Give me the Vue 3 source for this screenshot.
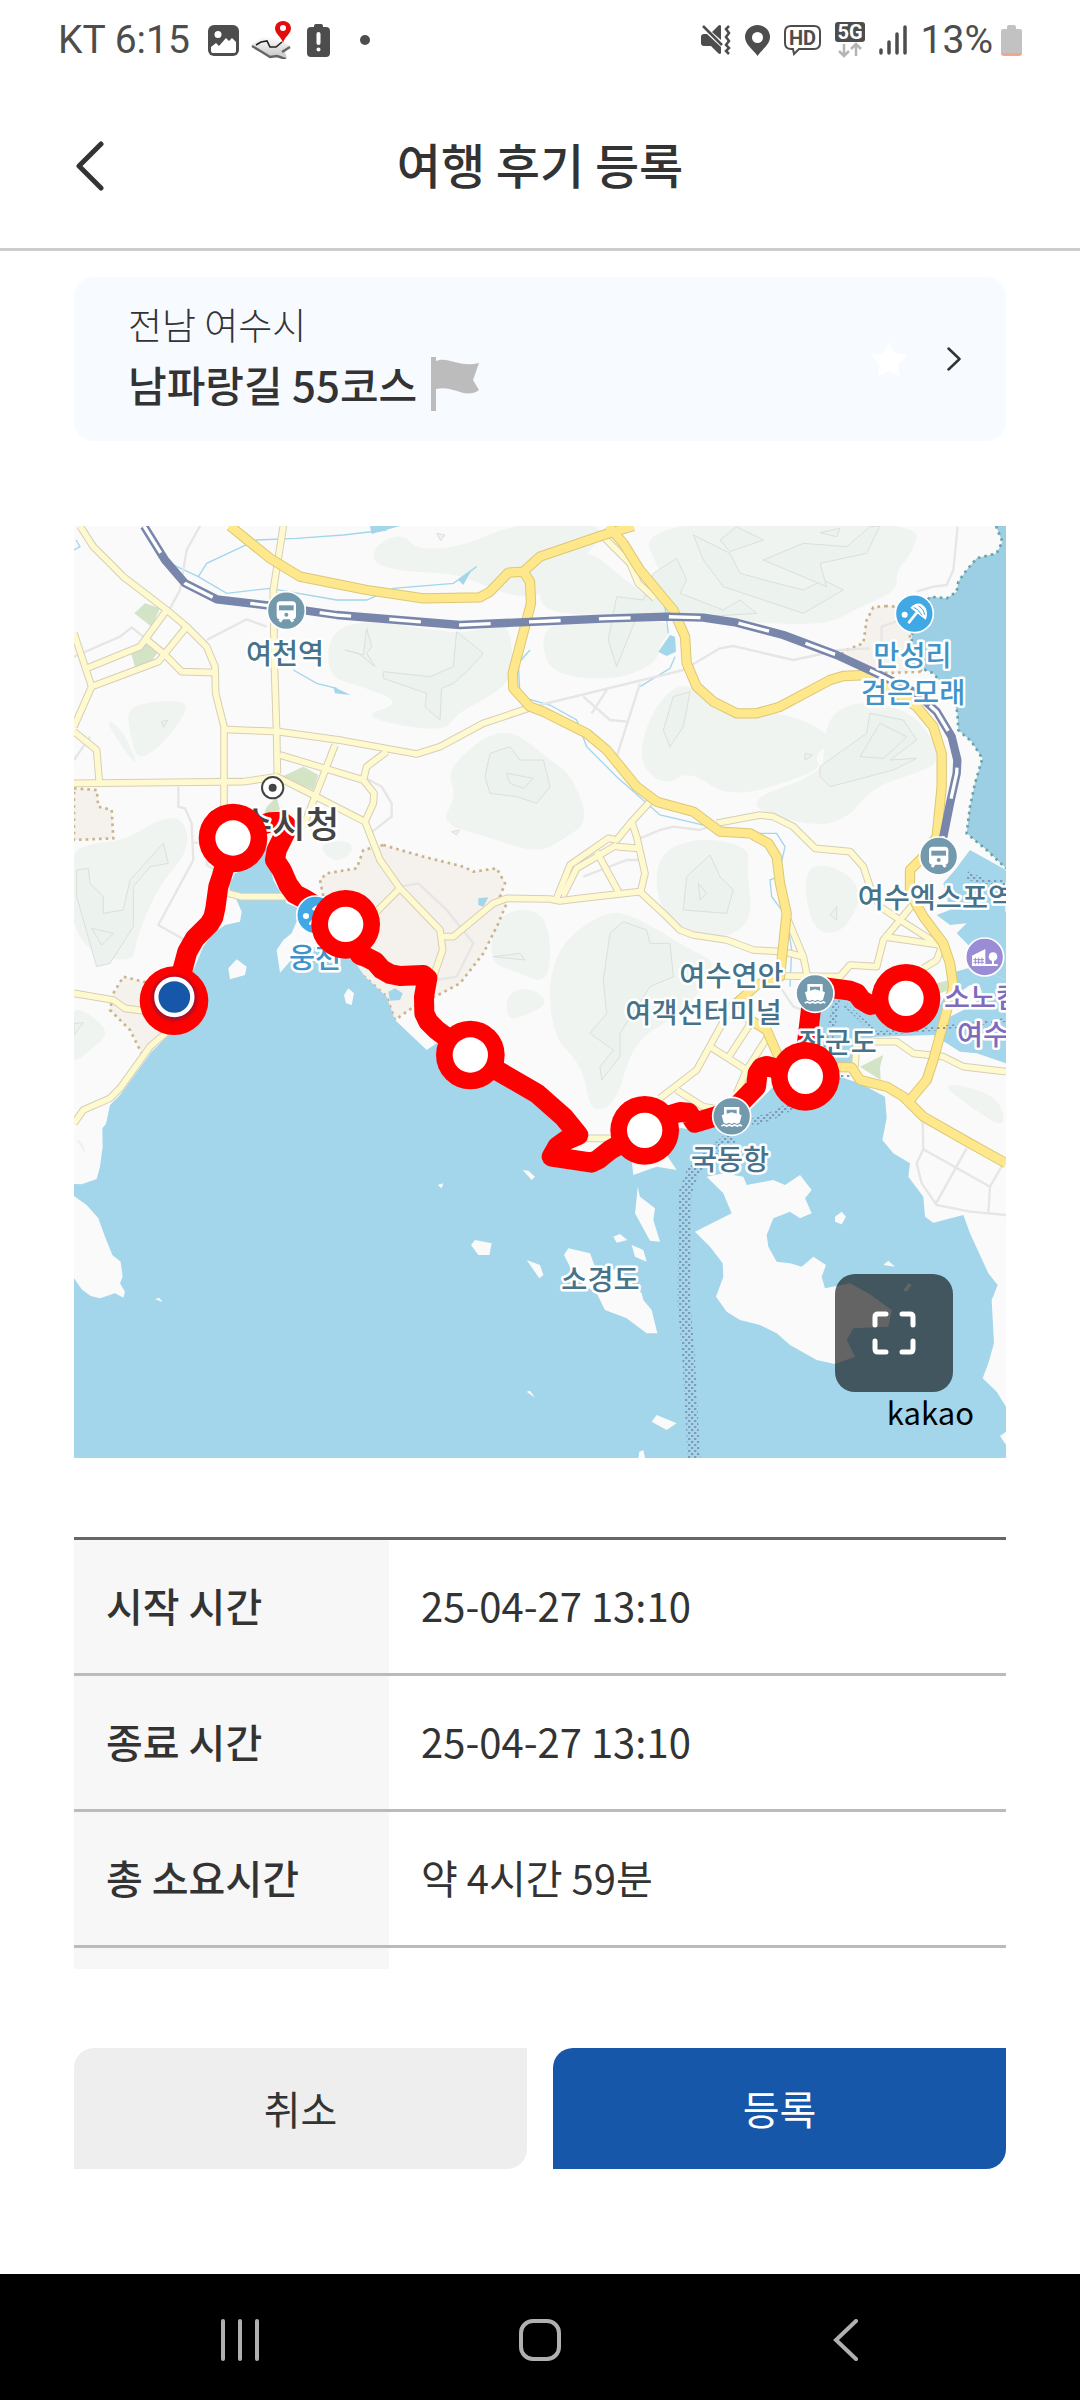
<template>
    <div class="app">
        <div class="status-bar">
            <div class="status-group">
                <span class="status-text">KT 6:15</span>
                <svg class="ic-photo" viewBox="0 0 31 31" width="31" height="31">
                    <rect width="31" height="31" rx="6" fill="#4d4d4d" />
                    <circle cx="10" cy="9.500" r="3.500" fill="#fff" />
                    <path d="M3 22l5-4 3 3 7-8 3 3 3-3 4 4v9q0 2-2 2H5q-2 0-2-2z" fill="#fff" />
                </svg>
                <svg class="ic-route" viewBox="0 0 40 38" width="40" height="38">
                    <defs>
                        <linearGradient id="paper" x1="0" y1="0" x2="0" y2="1">
                            <stop offset="0" stop-color="#fff" />
                            <stop offset="1" stop-color="#c9c9c9" />
                        </linearGradient>
                    </defs>
                    <path d="M0 24L12 15l20 6 7 4-5 7 2 4-8-1-8 1-9-5z" fill="url(#paper)" />
                    <path d="M1 25l10 6 8 5 7-1 9 3M31 31l8-5" fill="none" stroke="#666" stroke-width="2.500" />
                    <path d="M5 24l5-3 6-1 3 6 6 0 6-5" fill="none" stroke="#222" stroke-width="1.600" />
                    <path d="M32 22C30 15 24 13 24 7a8 7 0 0 1 16 0c0 6-6 8-8 15z" fill="#e30b0b" />
                    <circle cx="32" cy="7" r="3" fill="#fff" />
                </svg>
                <svg class="ic-warn" viewBox="0 0 23 33" width="23" height="33">
                    <path d="M7 3V2q0-2 2-2h5q2 0 2 2v1h3q4 0 4 4v22q0 4-4 4H4q-4 0-4-4V7q0-4 4-4z" fill="#4d4d4d" />
                    <path d="M11.500 10v9" stroke="#fff" stroke-width="4" stroke-linecap="round" />
                    <circle cx="11.500" cy="25.500" r="2" fill="#fff" />
                </svg>
                <span class="status-dot"></span>
            </div>
            <div class="status-group status-right">
                <svg viewBox="0 0 30 30" width="30" height="30">
                    <path d="M0 12q0-3 3-3h3L20 22v6q-1 2-3 0l-7-7H3q-3 0-3-3zM11 7l6-6q2-2 3 0v14z" fill="#4d4d4d" />
                    <path d="M2 1l19 19" stroke="#4d4d4d" stroke-width="2.500" />
                    <path d="M28 1l-3 3 3 4-3 4 3 4-3 4 3 3-3 3 3 3" fill="none" stroke="#4d4d4d" stroke-width="2.500" />
                </svg>
                <svg viewBox="0 0 25 31" width="25" height="31">
                    <path d="M12.500 31C9 25 0 20 0 12a12.500 12 0 0 1 25 0c0 8-9 13-12.500 19z" fill="#4d4d4d" />
                    <circle cx="12.500" cy="12.500" r="5.500" fill="#fff" />
                </svg>
                <svg viewBox="0 0 37 32" width="37" height="32">
                    <path d="M7 2h23q6 0 6 6v11q0 6-6 6H15l-5 5-1-5H7q-6 0-6-6V8q0-6 6-6z" fill="none" stroke="#4d4d4d" stroke-width="2" />
                    <text x="18.500" y="21" text-anchor="middle" class="badge-text" font-size="20" fill="#4d4d4d">HD</text>
                </svg>
                <svg viewBox="0 0 30 36" width="30" height="36">
                    <rect width="30" height="20" rx="3" fill="#4d4d4d" />
                    <text x="15" y="17" text-anchor="middle" class="badge-text" font-size="20" fill="#fff">5G</text>
                    <path d="M9 22v12M4 29l5 5 5-5M21 34V22M16 27l5-5 5 5" fill="none" stroke="#b5b5b5" stroke-width="2.500" />
                </svg>
                <svg viewBox="0 0 28 30" width="28" height="30">
                    <path d="M2 25v3M10 17v11M18 9v19M26 2v26" stroke="#4d4d4d" stroke-width="3.500" stroke-linecap="round" />
                </svg>
                <span class="status-text">13%</span>
                <svg class="ic-battery" viewBox="0 0 21 31" width="21" height="31">
                    <path d="M6 4V2q0-2 2-2h5q2 0 2 2v2h4q2 0 2 2v22H0V6q0-2 2-2z" fill="#c2c2c2" />
                    <path d="M0 28h21q0 3-3 3H3q-3 0-3-3z" fill="#f5a58c" />
                </svg>
            </div>
        </div>

        <header class="page-header">
            <button type="button" class="btn-back" aria-label="뒤로">
                <svg viewBox="0 0 28 50" width="28" height="50">
                    <path d="M25 3L3 25l22 22" fill="none" stroke="#333" stroke-width="5" stroke-linecap="round" stroke-linejoin="round" />
                </svg>
            </button>
            <h1>여행 후기 등록</h1>
        </header>

        <main class="content">
            <a href="#" class="course-card">
                <div class="course-info">
                    <span class="course-area">전남 여수시</span>
                    <span class="course-name">
                        남파랑길 55코스
                        <svg viewBox="0 0 49 54" width="49" height="54">
                            <path d="M0 0h5v4c13-5 22 7 43 2l-6 17 6 10c-14 10-25-5-43-1v22H0z" fill="#bcbcbc" />
                        </svg>
                    </span>
                </div>
                <svg class="ic-star" viewBox="0 0 36 34" width="36" height="34">
                    <path d="M18 0l5.500 11L36 13l-9 9 2 12-11-5-11 5 1-12-8-9 12-2z" fill="#fff" />
                </svg>
                <svg viewBox="0 0 14 24" width="14" height="24">
                    <path d="M1.500 1.500L12.500 12l-11 10.500" fill="none" stroke="#333" stroke-width="2.500" stroke-linecap="round" stroke-linejoin="round" />
                </svg>
            </a>

            <section class="map">
                <svg class="map-canvas" viewBox="12 18 2796 2796">
                    <defs>
                        <pattern id="ferry" width="18" height="18" patternUnits="userSpaceOnUse">
                            <rect x="0" y="0" width="7" height="6" fill="#8399b5" />
                            <rect x="9" y="9" width="7" height="6" fill="#8399b5" />
                        </pattern>
                        <radialGradient id="startGlow">
                            <stop offset="0.6" stop-color="#5a1c50" />
                            <stop offset="1" stop-color="#f00" />
                        </radialGradient>
                    </defs>

                    <rect x="12" y="18" width="2796" height="2796" fill="#fafafa" />
                    <path v-for="(p, i) in forests" :key="'f' + i" :d="smooth(p)" fill="#eff4f0" />
                    <polygon v-for="(p, i) in contours" :key="'c' + i" :points="p" class="contour" />
                    <polygon v-for="(p, i) in districts" :key="'d' + i" :points="p" class="district" />
                    <polygon v-for="(p, i) in parks" :key="'p' + i" :points="p" fill="#d3e3c6" />
                    <polyline v-for="(p, i) in streams" :key="'s' + i" :points="p" class="stream" />
                    <polygon v-for="(p, i) in waters" :key="'w' + i" :points="p" fill="#a3d6eb" />
                    <polygon :points="eastSea" fill="#9dcfe4" />
                    <polyline :points="eastShore" class="shore" />
                    <polygon v-for="(p, i) in islands" :key="'i' + i" :points="p" fill="#fafafa" />

                    <polyline v-for="(p, i) in lanes" :key="'l' + i" :points="p" class="road lane" />
                    <polyline v-for="(p, i) in minorRoads" :key="'mc' + i" :points="p" class="road minor-case" />
                    <polyline v-for="(p, i) in minorRoads" :key="'m' + i" :points="p" class="road minor" />
                    <polyline v-for="(p, i) in majorRoads" :key="'Mc' + i" :points="p" class="road major-case" />
                    <polyline v-for="(p, i) in majorRoads" :key="'M' + i" :points="p" class="road major" />
                    <polyline :points="railway" class="road rail" />
                    <polyline :points="railway" class="rail-dash" />
                    <polyline v-for="(f, i) in ferries" :key="'y' + i" :points="f.points" class="ferry" :stroke-width="f.width" />

                    <polyline :points="track" class="track" />

                    <g v-for="poi in pois" :key="poi.x" :transform="`translate(${poi.x} ${poi.y})`">
                        <circle r="57" :fill="poi.color" stroke="#fff" stroke-width="5" />
                        <template v-if="poi.type === 'train'">
                            <rect x="-29" y="-28" width="58" height="54" rx="11" fill="#fff" />
                            <path d="M-22 -16h44v15h-44z" :fill="poi.color" />
                            <circle cy="12" r="6" :fill="poi.color" />
                            <path d="M-20 33l7-10M20 33l-7-10" stroke="#fff" stroke-width="9" />
                        </template>
                        <template v-else-if="poi.type === 'ship'">
                            <path d="M-23 -28h46v22l7 3-6 22-8 4-8-4-8 4-8-4-8 4-8-4-6-22 7-3z" fill="#fff" />
                            <path d="M-15 -20h30v12L0 -12l-15 4z" :fill="poi.color" />
                            <path d="M-31 29l8 -3 8 3 8 -3 8 3 8 -3 8 3 8 -3 6 3" fill="none" stroke="#fff" stroke-width="5" />
                        </template>
                        <template v-else-if="poi.type === 'beach'">
                            <path d="M-12 -18q28-26 46 2 8 16 0 34z" fill="#fff" />
                            <path d="M8 -4l-24 30M2 -22l22 27" stroke="#fff" stroke-width="8" stroke-linecap="round" />
                            <path d="M-2 -19q15 5 25 24M12 -24q16 8 20 28" fill="none" :stroke="poi.color" stroke-width="3" />
                            <circle cx="-29" cy="3" r="9" fill="#fff" />
                        </template>
                        <template v-else>
                            <path d="M-38 27V-4L2 -24v51zM2 27h37v-6H2z" fill="#fff" />
                            <circle cx="25" cy="-1" r="13" fill="#fff" />
                            <path d="M25 5v18" stroke="#fff" stroke-width="6" />
                            <path d="M-28 2v20M-18 2v20M-8 2v20M-34 8h32M-34 16h32" :stroke="poi.color" stroke-width="3" />
                        </template>
                    </g>
                    <circle cx="608" cy="803" r="32" fill="#fff" stroke="#444" stroke-width="6" />
                    <circle cx="608" cy="803" r="12" fill="#444" />

                    <text v-for="label in labels" :key="label.text + label.y" :x="label.x" :y="label.y"
                        :class="['label', label.kind]">{{ label.text }}</text>

                    <g v-for="m in markers" :key="m.x">
                        <circle :cx="m.x" :cy="m.y" r="103" fill="#f00" />
                        <circle :cx="m.x" :cy="m.y" r="53" fill="#fff" />
                    </g>
                    <circle cx="312" cy="1442" r="103" fill="#f00" />
                    <circle cx="313" cy="1434" r="76" fill="url(#startGlow)" />
                    <circle cx="313" cy="1431" r="54" fill="#1757aa" stroke="#fff" stroke-width="13" />
                </svg>
                <button type="button" class="btn-fullscreen" aria-label="전체화면">
                    <svg viewBox="0 0 44 44" width="44" height="44">
                        <path d="M3 14V6q0-3 3-3h8M30 3h8q3 0 3 3v8M41 30v8q0 3-3 3h-8M14 41H6q-3 0-3-3v-8" fill="none" stroke="#fff"
                            stroke-width="5" stroke-linecap="round" />
                    </svg>
                </button>
                <span class="map-brand">kakao</span>
            </section>

            <table class="info-table">
                <tbody>
                    <tr v-for="row in rows" :key="row.label">
                        <th scope="row">{{ row.label }}</th>
                        <td>{{ row.value }}</td>
                    </tr>
                </tbody>
            </table>
        </main>

        <div class="actions">
            <button type="button" class="btn btn-cancel">취소</button>
            <button type="button" class="btn btn-submit">등록</button>
        </div>

        <nav class="system-nav">
            <button type="button" aria-label="최근 앱">
                <svg viewBox="0 0 42 42" width="42" height="42">
                    <path d="M4 2v38M21 2v38M38 2v38" stroke="#b0b0b0" stroke-width="4" stroke-linecap="round" />
                </svg>
            </button>
            <button type="button" aria-label="홈">
                <svg viewBox="0 0 42 42" width="42" height="42">
                    <rect x="2" y="2" width="38" height="38" rx="12" fill="none" stroke="#b0b0b0" stroke-width="4" />
                </svg>
            </button>
            <button type="button" aria-label="이전">
                <svg viewBox="0 0 42 42" width="42" height="42">
                    <path d="M37 2L17 21l20 19" fill="none" stroke="#b0b0b0" stroke-width="4" stroke-linecap="round" />
                </svg>
            </button>
        </nav>
    </div>
</template>

<script setup>
const rows = [
    { label: '시작 시간', value: '25-04-27 13:10' },
    { label: '종료 시간', value: '25-04-27 13:10' },
    { label: '총 소요시간', value: '약 4시간 59분' },
    { label: '', value: '' }
];

// Suaviza un polígono pasando por el punto medio de cada lado
function smooth(points) {
    const pts = points.split(' ').map(p => p.split(',').map(Number));
    const mid = (a, b) => `${(a[0] + b[0]) / 2} ${(a[1] + b[1]) / 2}`;
    const last = pts[pts.length - 1];
    return `M${mid(last, pts[0])}` + pts.map((p, i) => `Q${p[0]} ${p[1]} ${mid(p, pts[(i + 1) % pts.length])}`).join('') + 'z';
}

// Coordenadas del mapa en unidades del viewBox
const waters = [
    '585,960 540,1040 495,1060 478,1095 480,1120 500,1140 515,1175 510,1205 465,1215 430,1240 400,1280 370,1350 340,1450 290,1550 245,1595 190,1670 150,1725 120,1755 108,1812 97,1825 98,1880 90,1940 80,1977 35,1993 12,1992 12,2814 2808,2814 2808,2660 2780,2615 2738,2575 2755,2530 2772,2470 2765,2340 2783,2295 2755,2260 2700,2140 2680,2085 2590,2108 2565,2090 2560,2030 2515,1970 2520,1930 2470,1900 2437,1860 2450,1795 2445,1730 2370,1690 2290,1665 2200,1660 2120,1690 2040,1770 1985,1800 1870,1830 1810,1820 1780,1890 1820,1950 1760,1940 1690,1965 1685,1920 1620,1890 1565,1925 1445,1910 1480,1860 1520,1840 1440,1770 1300,1680 1180,1580 1100,1570 1070,1590 975,1500 950,1430 885,1370 850,1320 830,1230 700,1170 650,1150 610,1080',
    '2235,1420 2290,1430 2340,1410 2500,1450 2590,1490 2640,1400 2640,1360 2710,1340 2740,1350 2808,1380 2808,1630 2720,1600 2670,1595 2630,1570 2590,1545 2420,1550 2360,1562 2350,1640 2220,1640 2225,1540',
    '2700,990 2655,1050 2620,1090 2640,1170 2600,1185 2640,1215 2690,1210 2660,1240 2710,1290 2740,1350 2808,1380 2808,1050',
    '900,18 990,18 905,42',
    '1165,180 1205,150 1180,195',
    '790,500 842,525 795,520',
    '1765,395 1800,345 1815,350 1818,395 1790,408',
    '955,1415 975,1405 998,1420 990,1440 960,1442',
    '1225,1135 1255,1132 1240,1160 1225,1155'
];
const eastShore = '2778,18 2797,65 2780,100 2720,115 2690,150 2665,185 2660,215 2630,235 2580,230 2530,300 2520,430 2590,460 2640,520 2662,575 2665,630 2705,665 2737,715 2715,790 2700,860 2690,940 2750,990 2808,1045';
const eastSea = eastShore + ' 2808,18';
const islands = [
    '12,2028 50,2055 85,2095 105,2150 127,2205 152,2225 158,2270 150,2290 165,2315 160,2333 135,2320 90,2335 62,2328 35,2308 12,2275',
    '690,1180 665,1240 640,1260 620,1290 630,1358 690,1290 740,1280 760,1220',
    '1495,2185 1560,2200 1575,2240 1650,2250 1715,2320 1720,2340 1745,2370 1762,2440 1730,2440 1670,2395 1605,2370 1580,2320 1520,2280 1482,2205',
    '1685,2175 1720,2190 1730,2225 1695,2210',
    '1630,2150 1650,2142 1672,2160 1640,2168',
    '1703,2000 1710,2030 1755,2065 1750,2100 1770,2165 1740,2162 1695,2080 1700,2035',
    '1910,1970 1960,1960 2020,1970 2030,1995 2110,1980 2145,1995 2190,1965 2225,2010 2205,2035 2225,2080 2190,2095 2160,2075 2110,2095 2090,2145 2095,2180 2120,2225 2160,2230 2195,2240 2230,2210 2268,2235 2255,2270 2265,2305 2340,2290 2395,2320 2465,2370 2455,2420 2350,2425 2330,2460 2355,2510 2295,2532 2240,2520 2160,2475 2120,2440 2070,2415 2010,2400 1970,2375 1938,2330 1960,2270 1958,2230 1920,2180 1875,2135 1985,2080 1960,2020',
    '2295,2090 2315,2075 2328,2090 2315,2113 2295,2105',
    '2440,2235 2455,2222 2475,2240',
    '2500,2310 2515,2290 2525,2295 2510,2315',
    '1745,2705 1760,2685 1820,2710 1790,2730',
    '1705,2814 1708,2795 1720,2790 1725,2814',
    '822,1425 835,1405 852,1420 845,1455 828,1450',
    '1203,2175 1215,2160 1265,2170 1258,2205 1225,2205',
    '1370,2220 1410,2235 1420,2265 1408,2275',
    '1358,1950 1375,1952 1395,1970 1385,1980',
    '1370,2615 1380,2612 1395,2633',
    '255,2337 268,2333 278,2347',
    '1103,1995 1120,1990 1115,2005',
    '475,1345 500,1318 530,1340 525,1365 480,1378',
    '2700,1395 2730,1400 2740,1430 2680,1470 2640,1490 2650,1430',
    '2808,2735 2790,2748 2808,2775'
];
const forests = [
    '905,130 920,70 1000,40 1040,90 1180,80 1330,10 1610,0 1560,110 1440,130 1420,230 1330,230 1230,190 1150,160 1000,155',
    '1700,0 2560,0 2520,110 2480,150 2480,215 2370,260 2260,320 1960,300 1850,280 1780,180',
    '1420,310 1600,300 1790,300 1800,340 1770,370 1760,430 1640,480 1480,470 1420,420',
    '1410,110 1560,90 1640,160 1790,275 1430,290 1400,200',
    '780,330 900,300 1080,330 1200,340 1310,300 1330,400 1320,480 1260,530 1160,580 1120,640 860,590 1000,550 880,500 770,470',
    '1440,720 1330,630 1240,650 1130,750 1160,830 1110,910 1250,950 1400,1000 1480,960 1560,900 1500,760',
    '1840,480 1920,550 2010,590 2130,570 2300,650 2230,710 2260,750 1980,840 1860,750 1780,800 1700,720 1750,560',
    '2280,580 2380,540 2540,580 2620,720 2540,760 2410,800 2330,900 2220,920 2000,850 2260,760 2260,680',
    '1760,1000 1890,950 2040,980 2030,1050 2050,1200 1960,1260 1860,1240 1760,1160',
    '2200,1050 2270,1030 2360,1080 2370,1160 2300,1250 2220,1220',
    '1440,1300 1600,1170 1700,1190 1860,1290 1950,1330 1840,1480 1690,1560 1640,1750 1560,1780 1540,1640 1440,1540',
    '1260,1330 1270,1200 1360,1160 1440,1200 1440,1400 1330,1350',
    '0,1000 60,970 170,960 260,900 340,890 360,990 270,1090 200,1250 190,1330 60,1300 0,1200',
    '170,560 290,540 360,550 320,620 260,690 200,720 180,640',
    '0,1460 60,1480 120,1540 60,1590 0,1640',
    '1310,1420 1380,1400 1440,1450 1360,1490 1310,1500',
    '2610,1690 2700,1700 2790,1740 2808,1830 2700,1760',
    '740,970 840,960 850,1000 790,1030',
    '12,1850 40,1870 50,1910',
    '100,595 150,620 200,720 190,730'
];
const contours = [
    '890,325 905,380 890,400 915,440 865,400 825,390 880,405',
    '940,455 1080,470 1150,440 1160,335 1240,400 1190,455 1150,490 1115,505 1110,600 1065,560 1070,520 940,475',
    '1245,770 1260,700 1320,680 1350,720 1420,720 1440,800 1400,850 1340,830 1260,820',
    '1310,760 1390,775 1360,805 1320,790',
    '1870,45 1980,100 2010,160 2120,190 2200,210 2260,180 2320,210 2200,280 2080,240 1960,200 1900,120',
    '1950,60 2000,20 2080,60 1980,95',
    '2080,120 2200,70 2330,80 2400,20 2430,18 2390,100 2250,130 2270,200',
    '2250,38 2310,25 2300,50',
    '1640,230 1720,240 1750,160 1820,115 1850,180 1830,220 1960,270 2010,240 2060,280 1900,290 1700,290 1640,440 1615,360',
    '1810,530 1860,515 1840,620 1800,680 1780,630',
    '2250,740 2390,640 2400,580 2500,600 2540,660 2460,720 2540,715 2470,750 2280,800 2250,770',
    '2370,710 2430,610 2510,650 2480,680 2440,715',
    '1850,1070 1920,1005 1950,1070 1990,1110 1970,1180 1840,1170',
    '1885,1090 1910,1120 1890,1140',
    '2280,1185 2300,1160 2300,1200',
    '1620,1240 1660,1205 1730,1230 1740,1270 1800,1270 1810,1370 1740,1400 1650,1540 1650,1610 1595,1680 1590,1640 1630,1590 1560,1540 1610,1480 1600,1380',
    '1270,1310 1350,1300 1365,1320',
    '20,1050 55,1045 60,1090 100,1130 100,1180 160,1170 180,1080 280,970 295,1030 240,1040 190,1100 190,1220 120,1330 80,1340 20,1130',
    '65,1225 130,1240 95,1275',
    '275,605 293,600 280,622',
    '2205,700 2228,705 2205,720',
    '1100,40 1125,45 1112,62',
    '1145,935 1168,930 1160,945',
    '12,1510 40,1508 12,1545'
];
const districts = [
    '12,805 80,810 85,860 125,870 130,955 12,960',
    '940,975 1060,1010 1180,1040 1210,1055 1280,1045 1305,1090 1290,1130 1310,1150 1285,1210 1240,1300 1170,1390 1095,1430 1060,1440 975,1500 950,1430 850,1340 760,1130 750,1080 770,1060 860,1045 880,990',
    '2450,258 2410,262 2390,300 2380,370 2330,390 2310,405 2420,460 2560,455 2520,430 2520,340 2500,262',
    '130,1420 160,1370 260,1395 290,1480 280,1550 215,1600 180,1530 120,1470'
];
const parks = [
    '225,250 270,265 245,320 193,280',
    '183,400 235,370 265,395 240,430 195,440',
    '635,770 700,740 745,765 730,810',
    '590,860 620,830 630,870 580,890',
    '2370,1640 2440,1605 2430,1640 2432,1680',
    '2600,1390 2680,1370 2660,1400 2610,1420'
];
const streams = [
    '300,130 385,170 410,130 560,60 680,55 820,45 950,30',
    '385,170 470,220 600,205 800,240 890,240 970,205 1150,190 1220,140',
    '670,450 740,490 800,505',
    '1380,390 1345,430 1350,530 1440,555 1520,600 1550,680 1640,770 1770,885 1920,920',
    '1785,260 1795,340',
    '1815,410 1800,445 1710,500',
    '2070,940 2120,940 2145,980 2125,1070 2100,1080 2105,1130 2150,1190 2165,1290 2160,1400',
    '18,60 30,80 12,90'
];
const lanes = [
    '390,18 350,90 330,210 300,265',
    '12,410 150,350 185,322 220,350',
    '12,720 60,650',
    '325,800 325,860 345,865 365,910 370,1020 265,1215 380,1280',
    '370,968 410,968 410,1035 450,1060',
    '410,360 530,298 590,320',
    '1410,555 1840,450 1950,385 1990,378 2170,420 2310,390 2400,385',
    '1710,490 1640,710',
    '1540,530 1620,600 1670,605',
    '1610,510 1565,580',
    '2435,385 2435,320 2520,290',
    '2663,20 2650,150 2630,195 2590,200 2540,215',
    '2558,1800 2560,1888 2760,2000 2800,1930',
    '2560,1888 2540,1930 2555,1990 2600,2055 2700,2075 2808,2085',
    '2690,1885 2598,2050',
    '2760,2000 2755,2080',
    '880,770 935,800 965,850 965,890 900,940',
    '990,1100 1045,1090 1130,1170 1210,1270 1160,1370 1100,1380',
    '1710,955 1770,930 1810,920 1890,930 1940,910',
    '1540,1070 1670,1020 1710,1020',
    '2130,1400 2170,1460 2210,1475'
];
const minorRoads = [
    '30,18 70,80 120,130 160,170 290,270 350,320 410,380 435,440 437,520 462,620 462,850 460,950',
    '640,18 610,210 613,430 620,640 622,760',
    '460,628 625,635 820,662 1040,702 1110,680 1240,610 1390,560',
    '12,790 520,785 620,770 700,810 885,905 930,1020 990,1105 1110,1230 1118,1290 1090,1370',
    '12,340 65,500 12,620',
    '12,635 80,690 88,790',
    '50,445 210,380 290,270',
    '65,500 265,425 350,320',
    '225,355 280,400 335,455 440,458',
    '630,705 880,780 912,820 910,850 885,905',
    '795,675 735,830 700,920',
    '950,695 890,740 880,780',
    '475,1120 515,1130 650,1130',
    '990,1105 900,1195',
    '1118,1250 1150,1250 1270,1150 1310,1135 1440,1137 1469,1143 1530,1135 1710,1115 1780,1180 1830,1230 1870,1245 1970,1260 2050,1290 2140,1295 2200,1310',
    '1740,845 1685,905 1700,950 1725,1060 1712,1115',
    '1685,905 1640,960 1615,955 1500,1035 1460,1135',
    '1640,975 1520,1045 1480,1125',
    '1580,995 1645,1115',
    '1640,980 1705,985',
    '1940,910 2070,885 2110,890 2170,920 2235,985 2340,995 2380,1040 2400,1100 2430,1160 2490,1200 2615,1280 2600,1320 2560,1345',
    '2540,1140 2440,1260 2420,1340 2340,1335 2310,1370 2140,1368',
    '2440,1250 2610,1275',
    '2150,1190 2200,1310 2212,1370',
    '1770,1735 1880,1650 1990,1450 2060,1400',
    '1920,1580 2030,1650 2000,1720',
    '1970,1620 2055,1490',
    '2030,1650 2100,1540',
    '1820,1710 1900,1760 1960,1770',
    '12,1420 130,1440 165,1465 280,1480',
    '12,1810 40,1770 120,1735 150,1705 240,1580 310,1520',
    '2355,1640 2360,1565 2480,1565 2530,1600 2620,1610 2680,1640 2808,1655',
    '1540,1855 1650,1855',
    '1600,50 1680,130 1705,190 1755,235'
];
const majorRoads = [
    '480,18 600,115 690,170 890,210 1060,235 1230,232 1260,215 1315,158 1360,155 1410,110 1600,45 1690,18',
    '1360,155 1380,185 1383,250 1328,460 1330,505 1380,560 1420,575 1550,640 1610,690 1700,800 1760,845 1870,875 1950,935 2040,940 2095,970 2120,1010 2130,1090 2150,1180 2135,1320 2130,1370 2060,1395 2010,1440 2040,1500 2090,1530 2130,1620',
    '1615,18 1660,70 1710,150 1810,270 1845,350 1850,430 1880,500 1930,545 2000,580 2060,580 2130,560 2280,480 2320,468 2390,465 2450,500 2540,560 2590,620 2615,700 2615,800 2600,950 2560,1010 2520,1050 2520,1120 2560,1190 2620,1270 2640,1330 2650,1400 2590,1620 2570,1680 2520,1740',
    '2206,1640 2345,1642 2370,1680 2450,1700 2500,1730 2560,1790 2700,1870 2808,1930'
];
const railway = '222,18 285,120 345,190 440,238 640,262 800,285 1170,315 1440,303 1600,296 1790,290 1900,293 2000,308 2140,345 2300,405 2430,465 2540,520 2600,575 2645,650 2662,720 2660,760 2640,850 2620,950 2607,1000';
const ferries = [
    { points: '1985,1850 1870,1950 1845,2020 1843,2200 1842,2350 1855,2500 1872,2814', width: 38 },
    { points: '2045,1808 2110,1785 2165,1758', width: 24 },
    { points: '2300,1440 2285,1520 2270,1600', width: 22 },
    { points: '2325,1455 2420,1540 2560,1530 2808,1500', width: 12 },
    { points: '2690,1065 2750,1090 2808,1090', width: 22 },
    { points: '2230,1690 2340,1665', width: 12 }
];
const track = '313,1440 340,1340 352,1295 375,1255 418,1212 430,1192 436,1165 445,1100 455,1070 489,954 560,920 600,907 635,905 648,915 645,940 620,990 615,1020 635,1050 655,1095 675,1122 700,1135 827,1213 870,1305 890,1312 915,1325 935,1348 960,1362 990,1368 1060,1365 1072,1375 1062,1430 1063,1480 1075,1505 1100,1530 1201,1605 1400,1720 1480,1790 1525,1845 1490,1860 1462,1880 1445,1910 1565,1928 1585,1918 1620,1890 1724,1831 1800,1785 1830,1776 1855,1778 1875,1808 1985,1775 2058,1700 2063,1660 2075,1642 2090,1638 2206,1669 2212,1560 2225,1450 2250,1400 2340,1412 2360,1420 2375,1440 2400,1455 2508,1435';

const markers = [
    { x: 489, y: 954 },
    { x: 827, y: 1213 },
    { x: 1201, y: 1605 },
    { x: 1724, y: 1831 },
    { x: 2206, y: 1669 },
    { x: 2508, y: 1435 }
];
const pois = [
    { type: 'train', x: 649, y: 272, color: '#7399ad' },
    { type: 'train', x: 2606, y: 1008, color: '#7399ad' },
    { type: 'ship', x: 2235, y: 1420, color: '#7399ad' },
    { type: 'ship', x: 1985, y: 1789, color: '#7399ad' },
    { type: 'beach', x: 2533, y: 281, color: '#41a8e6' },
    { type: 'beach', x: 737, y: 1185, color: '#41a8e6' },
    { type: 'hotel', x: 2744, y: 1311, color: '#9a8cd5' }
];
const labels = [
    { text: '여천역', x: 528, y: 433, kind: 'place' },
    { text: '만성리', x: 2410, y: 438, kind: 'beach' },
    { text: '검은모래', x: 2373, y: 548, kind: 'beach' },
    { text: '여수엑스포역', x: 2363, y: 1165, kind: 'place' },
    { text: '여수연안', x: 1828, y: 1397, kind: 'place' },
    { text: '여객선터미널', x: 1666, y: 1508, kind: 'place' },
    { text: '장군도', x: 2186, y: 1598, kind: 'place' },
    { text: '국동항', x: 1863, y: 1951, kind: 'place' },
    { text: '소경도', x: 1474, y: 2310, kind: 'place' },
    { text: '소노캄', x: 2622, y: 1465, kind: 'hotel' },
    { text: '여수', x: 2661, y: 1575, kind: 'hotel' },
    { text: '웅천', x: 657, y: 1345, kind: 'beach' },
    { text: '여수시청', x: 404, y: 953, kind: 'city' }
];
</script>

<style scoped>
.app {
    display: flex;
    flex-direction: column;
    height: 100vh;
    background: #fff;
    color: #333;
    font-family: "Noto Sans CJK KR", sans-serif;
}

button {
    padding: 0;
    border: 0;
    background: none;
    font-family: inherit;
    cursor: pointer;
}

svg {
    display: block;
    flex-shrink: 0;
}

/* Barra de estado */
.status-bar {
    display: flex;
    justify-content: space-between;
    align-items: flex-start;
    box-sizing: border-box;
    height: 84px;
    padding: 16px 58px 0;
}

.status-group {
    display: flex;
    align-items: center;
    height: 48px;
}

.status-right {
    gap: 14px;
}

.status-text {
    color: #4d4d4d;
    font-family: Roboto, sans-serif;
    font-size: 39px;
    line-height: 48px;
}

.ic-photo {
    margin-left: 18px;
}

.ic-route {
    margin-left: 12px;
}

.ic-warn {
    margin-left: 16px;
}

.status-dot {
    width: 10px;
    height: 10px;
    margin-left: 30px;
    border-radius: 50%;
    background: #4d4d4d;
}

.status-right .ic-battery {
    margin-left: -6px;
}

.badge-text {
    font-family: Roboto, sans-serif;
    font-weight: 700;
}

/* Cabecera */
.page-header {
    display: flex;
    align-items: center;
    justify-content: center;
    position: relative;
    height: 164px;
    border-bottom: 3px solid #ccc;
}

.btn-back {
    position: absolute;
    left: 76px;
}

h1 {
    margin: 0;
    padding-bottom: 6px;
    font-size: 48px;
    font-weight: 500;
    line-height: 64px;
}

.content {
    flex: 1;
    min-height: 0;
    padding: 26px 74px 0;
    overflow-y: auto;
    scrollbar-width: none;
}

.course-card {
    display: flex;
    align-items: center;
    box-sizing: border-box;
    min-height: 164px;
    padding: 0 45px 0 54px;
    border-radius: 20px;
    background: #f7faff;
    color: #333;
    text-decoration: none;
}

.course-info {
    display: flex;
    flex: 1;
    flex-direction: column;
    padding-bottom: 14px;
}

.course-area {
    font-size: 37px;
    font-weight: 300;
    line-height: 64px;
}

.course-name {
    display: flex;
    align-items: center;
    gap: 14px;
    font-size: 42px;
    font-weight: 500;
    line-height: 56px;
}

.ic-star {
    margin-right: 40px;
}

/* Mapa */
.map {
    position: relative;
    margin-top: 85px;
}

.map-canvas {
    width: 100%;
    aspect-ratio: 1;
    overflow: hidden;
}

.road {
    fill: none;
    stroke-linejoin: round;
}

.lane {
    stroke: #e6e6e6;
    stroke-width: 7;
}

.minor-case {
    stroke: #d6cfb6;
    stroke-width: 23;
}

.minor {
    stroke: #fff9cf;
    stroke-width: 17;
}

.major-case {
    stroke: #dcc775;
    stroke-width: 31;
}

.major {
    stroke: #ffe88c;
    stroke-width: 25;
}

.rail {
    stroke: #7986ab;
    stroke-width: 25;
}

.rail-dash {
    fill: none;
    stroke: #fff;
    stroke-width: 10;
    stroke-dasharray: 95 115;
}

.contour {
    fill: #ecf2ed;
    stroke: #dbe0da;
    stroke-width: 3;
}

.district {
    fill: #f5f1ed;
    stroke: #c9b48c;
    stroke-width: 8;
    stroke-dasharray: 8 12;
}

.stream {
    fill: none;
    stroke: #a3d6eb;
    stroke-width: 4;
}

.shore {
    fill: none;
    stroke: #6ba4ab;
    stroke-width: 8;
    stroke-dasharray: 8 12;
}

.ferry {
    fill: none;
    stroke: url(#ferry);
}

.track {
    fill: none;
    stroke: #f00;
    stroke-width: 60;
    stroke-linecap: round;
    stroke-linejoin: round;
}

.label {
    font-size: 85px;
    font-weight: 500;
    paint-order: stroke;
    stroke: #fff;
    stroke-width: 15;
    stroke-linejoin: round;
}

.place {
    fill: #467389;
}

.beach {
    fill: #4093c8;
}

.hotel {
    fill: #7f6bbd;
}

.city {
    fill: #444;
    font-size: 110px;
}

.btn-fullscreen {
    display: flex;
    align-items: center;
    justify-content: center;
    position: absolute;
    right: 53px;
    bottom: 66px;
    width: 118px;
    height: 118px;
    border-radius: 20px;
    background: rgba(0, 0, 0, 0.6);
}

.map-brand {
    position: absolute;
    right: 32px;
    bottom: 24px;
    color: #000;
    font-size: 31px;
    line-height: 44px;
}

/* Tabla de datos */
.info-table {
    width: 100%;
    margin-top: 79px;
    border-top: 3px solid #666;
    border-spacing: 0;
    table-layout: fixed;
    font-size: 40px;
    line-height: 60px;
    text-align: left;
}

th,
td {
    box-sizing: border-box;
    height: 136px;
    padding: 0 32px 4px;
    border-bottom: 3px solid #bbb;
}

th {
    width: 315px;
    background: #f7f7f7;
    font-weight: 500;
}

.actions {
    display: flex;
    gap: 26px;
    padding: 79px 74px 105px;
}

.btn {
    flex: 1;
    height: 121px;
    padding-bottom: 2px;
    border-radius: 20px 0;
    font-size: 40px;
}

.btn-cancel {
    background: #eee;
    color: #333;
}

.btn-submit {
    background: #1757aa;
    color: #fff;
}

.system-nav {
    display: flex;
    padding: 0 90px;
    background: #000;
}

.system-nav button {
    display: flex;
    flex: 1;
    align-items: center;
    justify-content: center;
    height: 126px;
    padding-top: 6px;
}
</style>

<style>
body {
    margin: 0;
}
</style>
